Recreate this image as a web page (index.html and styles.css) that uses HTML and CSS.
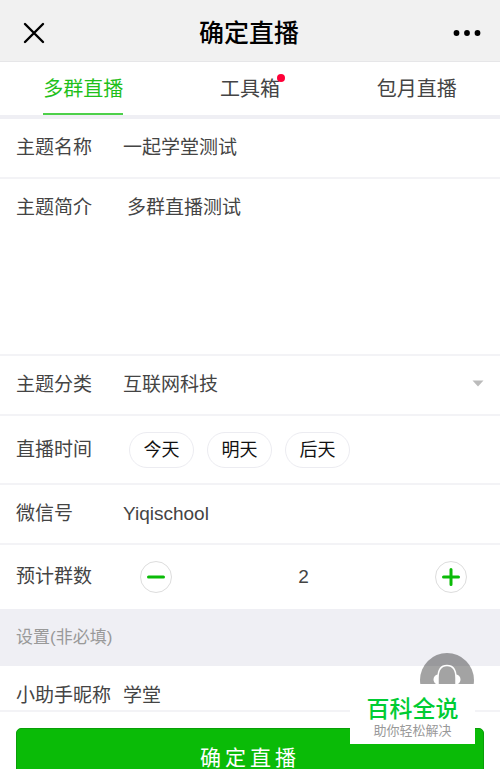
FILE: index.html
```html
<!DOCTYPE html>
<html lang="zh-CN">
<head>
<meta charset="utf-8">
<meta name="viewport" content="width=device-width, initial-scale=1">
<title>确定直播</title>
<link rel="stylesheet" href="styles.css">
</head>
<body>
<div class="page">
  <header class="navbar">
    <button class="icon-button" type="button" aria-label="关闭">
      <svg width="22" height="22" viewBox="0 0 22 22"><path d="M2 2 20 20M20 2 2 20" fill="none" stroke="#000" stroke-width="2.4" stroke-linecap="round"/></svg>
    </button>
    <h1 class="title">确定直播</h1>
    <button class="icon-button" type="button" aria-label="更多">
      <svg width="28" height="8" viewBox="0 0 28 8"><circle cx="3.5" cy="4" r="2.9"/><circle cx="14" cy="4" r="2.9"/><circle cx="24.5" cy="4" r="2.9"/></svg>
    </button>
  </header>
  <nav class="tabs">
    <a class="tab active" href="#group">多群直播</a>
    <a class="tab" href="#tools">工具箱<i class="badge"></i></a>
    <a class="tab" href="#monthly">包月直播</a>
  </nav>
  <form class="form">
    <div class="row">
      <label class="label" for="name">主题名称</label>
      <input class="field" id="name" type="text" value="一起学堂测试">
    </div>
    <div class="row row-intro">
      <label class="label" for="intro">主题简介</label>
      <textarea class="field area" id="intro">多群直播测试</textarea>
    </div>
    <div class="row">
      <label class="label" for="category">主题分类</label>
      <select class="field" id="category"><option>互联网科技</option></select>
      <svg class="arrow" width="12" height="10" viewBox="0 0 12 10"><path d="M.5.5h11L6 6.5z" fill="#bbb"/></svg>
    </div>
    <div class="row row-time">
      <span class="label">直播时间</span>
      <div class="pills">
        <button class="pill" type="button">今天</button>
        <button class="pill" type="button">明天</button>
        <button class="pill" type="button">后天</button>
      </div>
    </div>
    <div class="row">
      <label class="label" for="wechat">微信号</label>
      <input class="field" id="wechat" type="text" value="Yiqischool">
    </div>
    <div class="row row-count">
      <label class="label" for="count">预计群数</label>
      <div class="stepper">
        <button class="step" type="button" aria-label="减少">
          <svg width="18" height="18" viewBox="0 0 18 18"><path d="M1.5 9h15" stroke="#0abb07" stroke-width="3" stroke-linecap="round"/></svg>
        </button>
        <input class="count" id="count" type="text" value="2">
        <button class="step" type="button" aria-label="增加">
          <svg width="18" height="18" viewBox="0 0 18 18"><path d="M1.5 9h15M9 1.5v15" stroke="#0abb07" stroke-width="3" stroke-linecap="round"/></svg>
        </button>
      </div>
    </div>
    <h2 class="section">设置(非必填)</h2>
    <div class="row row-helper">
      <label class="label" for="helper">小助手昵称</label>
      <input class="field" id="helper" type="text" value="学堂">
    </div>
    <div class="footer">
      <button class="submit" type="button">确定直播</button>
    </div>
  </form>
</div>
<aside class="floating">
  <button class="service" type="button" aria-label="客服">
    <svg width="54" height="54" viewBox="0 0 54 54">
      <circle cx="27" cy="27" r="27" fill="#000" fill-opacity=".36"/>
      <path d="M18 31V25C18 17 21 12.500 27 12.500S36 17 36 25V31" fill="none" stroke="#fff" stroke-width="1.500"/>
      <path d="M18 21.500C12 22 12 31 18 31.500ZM36 21.500C42 22 42 31 36 31.500Z" fill="#fff"/>
    </svg>
  </button>
  <div class="brand">
    <strong class="brand-name">百科全说</strong>
    <span class="brand-line">助你轻松解决</span>
  </div>
</aside>
</body>
</html>
```

FILE: styles.css
```css
* {
  box-sizing: border-box;
}

body,
h1,
h2 {
  margin: 0;
}

body,
button,
input,
textarea,
select {
  font-family: "Liberation Sans", "Noto Sans CJK SC", sans-serif;
  font-size: 19px;
  color: #444;
}

button,
input,
textarea,
select {
  margin: 0;
  padding: 0;
  border: 0;
  background: none;
  outline: 0;
  appearance: none;
}

svg {
  display: block;
}

.page {
  height: 100vh;
  overflow-y: auto;
  scrollbar-width: none;
  background: #fff;
}

.navbar {
  display: flex;
  align-items: center;
  justify-content: space-between;
  height: 62px;
  padding: 4px 19px 0 23px;
  background: #f1f1f1;
  border-bottom: 1px solid #e6e6e8;
}

.title {
  font-size: 25px;
  line-height: 36px;
  font-weight: 500;
  color: #000;
}

.tabs {
  display: grid;
  grid-template-columns: repeat(3, 1fr);
  justify-items: center;
  height: 57px;
  border-bottom: 4px solid #efeff4;
}

.tab {
  position: relative;
  padding-top: 3px;
  font-size: 20px;
  line-height: 48px;
  color: #444;
  text-decoration: none;
}

.active {
  color: #1fc01c;
  border-bottom: 2px solid #4dd04a;
}

.badge {
  position: absolute;
  top: 12px;
  right: -5px;
  width: 8px;
  height: 8px;
  border-radius: 50%;
  background: #ff0038;
}

.row {
  display: flex;
  align-items: center;
  height: 60px;
  padding: 0 16px;
  border-bottom: 2px solid #f3f3f6;
}

.label {
  flex: none;
  width: 107px;
  line-height: 28px;
  white-space: nowrap;
}

.field {
  flex: 1;
  min-width: 0;
  height: 28px;
  line-height: 28px;
}

.row-intro {
  align-items: flex-start;
  height: 177px;
  padding-top: 15px;
}

.area {
  height: 144px;
  padding: 0 4px;
  resize: none;
}

.arrow {
  pointer-events: none;
}

.row-time {
  height: 69px;
}

.pills {
  display: flex;
  gap: 13px;
  padding-left: 6px;
}

.pill {
  width: 65px;
  height: 36px;
  border: 1px solid #ececf1;
  border-radius: 18px;
  font-size: 18px;
  line-height: 26px;
  color: #111;
}

.row-count {
  height: 64px;
  border-bottom: 0;
}

.stepper {
  display: flex;
  flex: 1;
  align-items: center;
  padding: 0 17px;
}

.step {
  display: flex;
  flex: none;
  align-items: center;
  justify-content: center;
  width: 32px;
  height: 32px;
  border: 1px solid #ddd;
  border-radius: 50%;
}

.count {
  flex: 1;
  min-width: 0;
  text-align: center;
}

.section {
  height: 57px;
  padding: 0 16px;
  background: #efeff4;
  font-size: 17px;
  line-height: 57px;
  font-weight: 400;
  color: #999;
}

.row-helper {
  height: 46px;
  padding-top: 16px;
}

.footer {
  padding: 16px;
}

.submit {
  width: 100%;
  height: 56px;
  border: 1px solid #099f08;
  border-radius: 5px;
  background: #0abb07;
  font-size: 21px;
  letter-spacing: 4px;
  color: #fff;
}

.floating {
  position: fixed;
  right: 25px;
  bottom: 25px;
  width: 125px;
}

.service {
  display: flex;
  justify-content: flex-end;
  width: 100%;
  height: 31px;
  padding-right: 1px;
  overflow: hidden;
  align-items: flex-start;
}

.brand {
  display: flex;
  flex-direction: column;
  align-items: center;
  height: 60px;
  padding: 9px 0 0;
  background: #fff;
}

.brand-name {
  font-size: 23px;
  line-height: 32px;
  font-weight: 500;
  color: #0c3;
}

.brand-line {
  font-size: 13px;
  line-height: 12px;
  color: #999;
}
```
